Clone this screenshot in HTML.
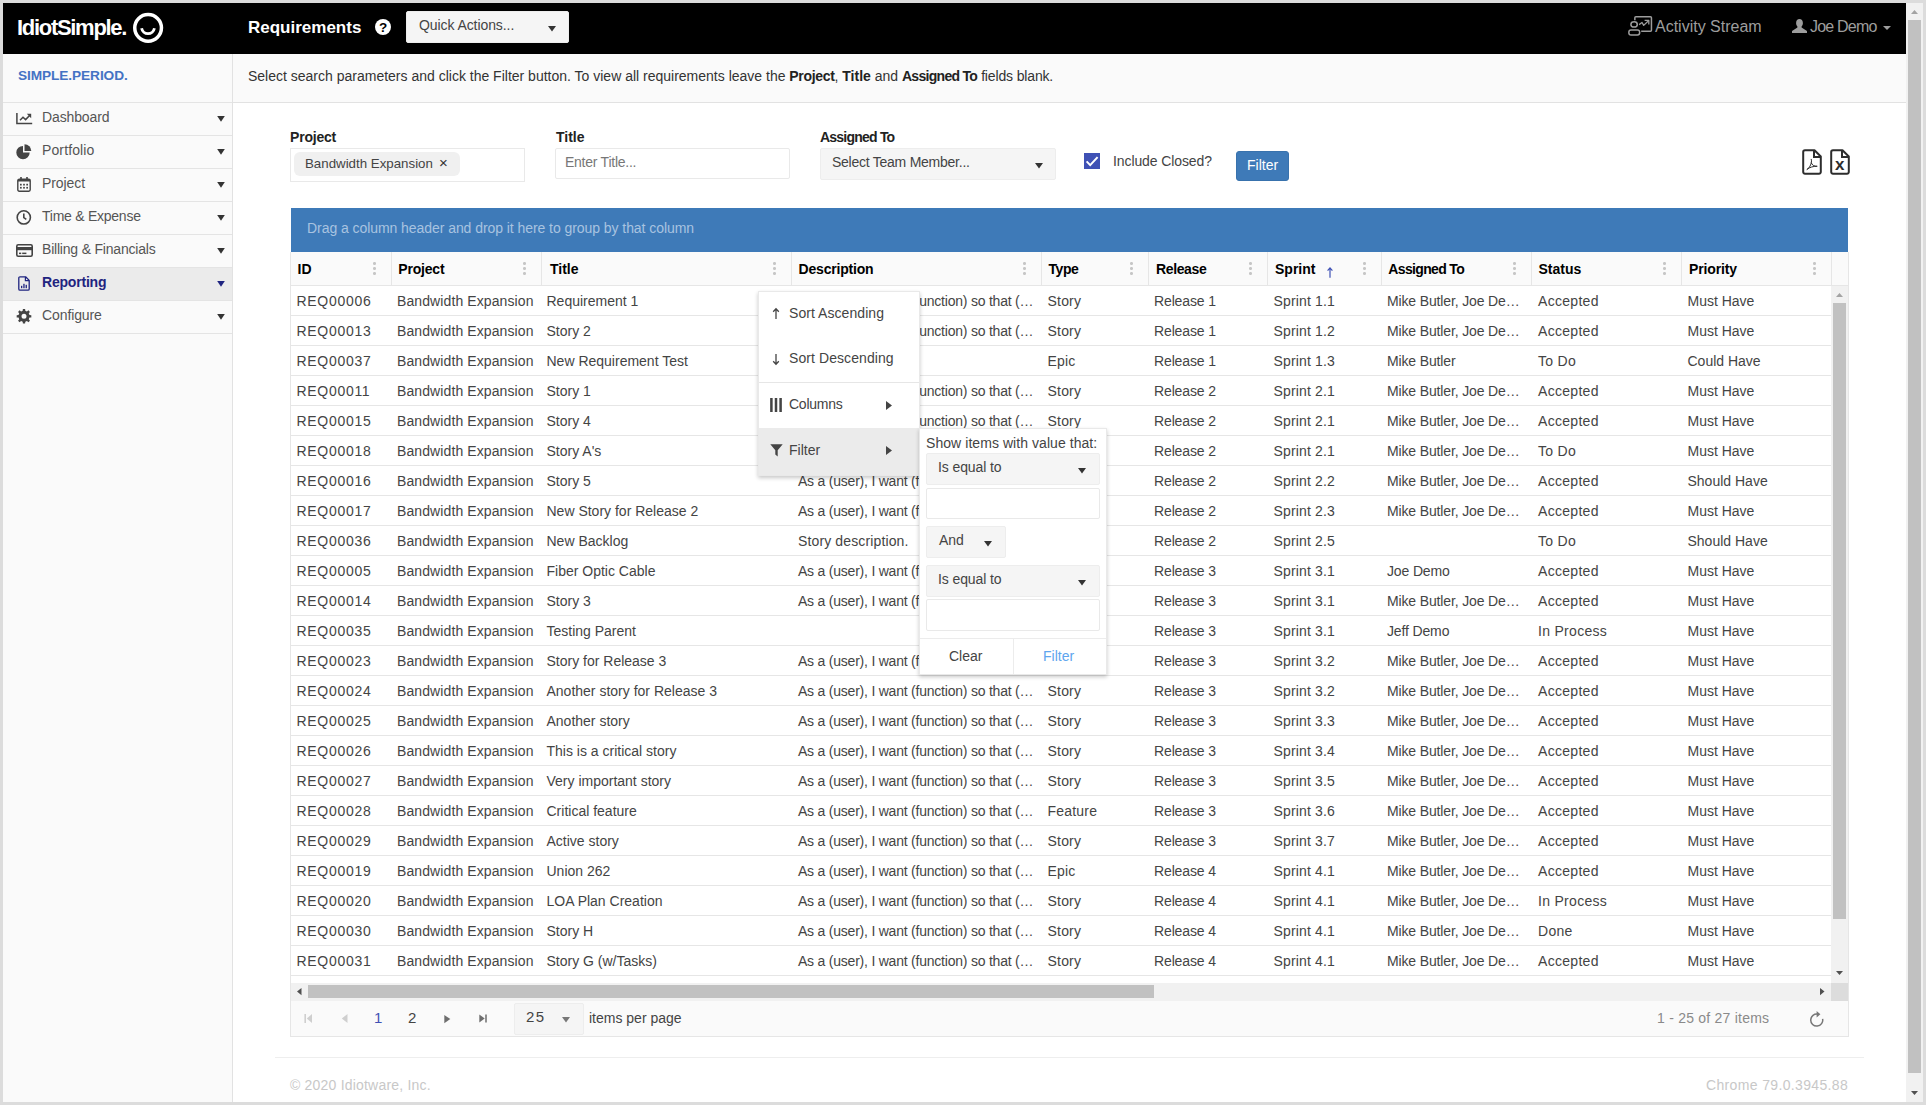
<!DOCTYPE html>
<html lang="en">
<head>
<meta charset="utf-8">
<title>Requirements</title>
<style>
*{box-sizing:border-box;margin:0;padding:0}
html,body{width:1926px;height:1105px;overflow:hidden}
body{background:#dcdcdc;font-family:"Liberation Sans",sans-serif;font-size:14px;color:#444;position:relative}
.abs{position:absolute}
.t{position:absolute;white-space:nowrap;line-height:20px;height:20px}
svg{position:absolute;overflow:visible}
#view{position:absolute;left:3px;top:3px;width:1920px;height:1099px;background:#fff;overflow:hidden}
/* everything inside #page uses full-image coordinates */
#page{position:absolute;left:-3px;top:-3px;width:1926px;height:1105px}
#hdr{left:3px;top:3px;width:1903px;height:51px;background:#000}
#side{left:3px;top:54px;width:230px;height:1048px;background:#fafafa;border-right:1px solid #e2e2e2}
#info{left:233px;top:54px;width:1673px;height:49px;background:#fafafa;border-bottom:1px solid #e2e2e2}
.mi{position:absolute;left:3px;width:229px;height:33px;border-bottom:1px solid #e4e4e4}
.mi .t{left:39px;top:4px;color:#555}
.mi.on{background:#ebebeb}
.mi.on .t{color:#1f2480;font-weight:bold}
.tri{position:absolute;width:8px;height:6px;background:#333;clip-path:polygon(0 0,100% 0,50% 100%);margin-top:-.3px}
.lbl{font-weight:bold;color:#222}
/* grid */
#grid{left:290px;top:252px;width:1559px;height:785px;border:1px solid #e6e6e6;border-top:0;background:#fff}
#grp{left:291px;top:208px;width:1557px;height:44px;background:#3e7ab8}
#ghead{left:291px;top:252px;width:1557px;height:34px;background:#fafafa;border-bottom:1px solid #e6e6e6}
.h{position:absolute;top:0;height:33px;line-height:34px;font-weight:bold;color:#000;padding-left:7px;border-right:1px solid #e6e6e6;white-space:nowrap}
.h i{position:absolute;right:15px;top:10px;width:3px;height:13px;background:radial-gradient(circle 1.5px at 1.5px 1.5px,#c6c6c6 1.3px,transparent 1.6px) 0 0/3px 5px repeat-y}
#gbody{left:291px;top:286px;width:1540px;height:697px;overflow:hidden}
.row{display:flex;height:30px;border-bottom:1px solid #e6e6e6;width:1540px}
.c{flex:none;padding-left:7px;line-height:30px;height:29px;white-space:nowrap;overflow:hidden;color:#444}
.c1{width:101px;padding-left:5.5px;letter-spacing:.7px}.c2{width:150px;padding-left:5px;letter-spacing:.1px}.c3{width:250px;padding-left:4.5px}.c4{width:250px;padding-left:6px;letter-spacing:-.22px}.c5{width:107px;padding-left:5.5px;letter-spacing:.2px}.c6{width:119px;padding-left:5px;letter-spacing:-.13px}
.c7{width:114px;padding-left:5.5px;letter-spacing:.15px}.c8{width:150px;padding-left:5px;letter-spacing:-.14px}.c9{width:150px;padding-left:6px;letter-spacing:.3px}.c10{width:149px;padding-left:5.500px}
.dd{position:absolute;background:#f5f5f5;border:1px solid #ededed;border-radius:2px}
.inp{position:absolute;background:#fff;border:1px solid #e9e9e9;border-radius:2px}
.tri2{position:absolute;width:8px;height:5.5px;background:#333;clip-path:polygon(0 0,100% 0,50% 100%)}
</style>
</head>
<body>
<div id="view"><div id="page">

<!-- ===== top black header ===== -->
<div id="hdr" class="abs"></div>
<div class="t" id="logo" style="left:17px;top:18px;font-size:22px;font-weight:bold;color:#fff;letter-spacing:-1.3px">IdiotSimple.</div>
<svg style="left:132px;top:12px" width="32" height="32" viewBox="0 0 32 32"><circle cx="16.100" cy="15.850" r="13.350" fill="none" stroke="#fff" stroke-width="3.500"/><path d="M9.600 16.300A6.500 6.500 0 0 0 22.400 16.300" fill="none" stroke="#fff" stroke-width="2.800"/></svg>
<div class="t" style="left:248px;top:18px;font-size:17px;font-weight:bold;color:#fff">Requirements</div>
<svg style="left:375px;top:19px" width="16" height="16" viewBox="0 0 16 16"><circle cx="8" cy="8" r="8" fill="#fff"/><text x="8" y="12.800" text-anchor="middle" font-family="Liberation Sans, sans-serif" font-size="13.500" font-weight="bold" fill="#000">?</text></svg>
<div class="dd" style="left:406px;top:11px;width:163px;height:32px"></div>
<div class="t" style="left:419px;top:15px;color:#444;letter-spacing:-.08px">Quick Actions...</div>
<div class="tri2" style="left:548px;top:26px"></div>
<!-- activity stream -->
<svg style="left:1628px;top:15px" width="26" height="22" viewBox="0 0 26 22"><g fill="none" stroke="#9d9d9d" stroke-width="1.500" stroke-linejoin="round"><ellipse cx="6.100" cy="9.400" rx="3.200" ry="2.600"/><rect x=".850" y="14.950" width="10.800" height="5.100" rx="2.200"/><path d="M6.850 5.200V2.850a1 1 0 0 1 1-1H22.450a1 1 0 0 1 1 1V15.350a1 1 0 0 1-1 1H13.200"/><path d="M11.100 9.600l2.900-2.100 1.700 2.900 4.800-4.700" stroke-width="1.300"/><path d="M16.600 5.400h4.200v4" stroke-width="1.300"/></g></svg>
<div class="t" style="left:1655px;top:17px;font-size:16px;color:#9d9d9d">Activity Stream</div>
<svg style="left:1792px;top:19px" width="15" height="14" viewBox="0 0 15 14"><path fill="#9d9d9d" d="M7.500 0c2 0 3.400 1.600 3.400 3.900 0 1.400-.5 2.700-1.300 3.600v.9l5 3.400c.3.200.4.500.4.800V14H0v-1.400c0-.3.100-.6.400-.8l5-3.400v-.9C4.600 6.600 4.100 5.300 4.100 3.900 4.100 1.600 5.500 0 7.500 0z"/></svg>
<div class="t" style="left:1810px;top:17px;font-size:16px;color:#9d9d9d;letter-spacing:-.8px">Joe Demo</div>
<div class="tri2" style="left:1883px;top:26px;height:4px;background:#9d9d9d"></div>

<!-- ===== sidebar ===== -->
<div id="side" class="abs"></div>
<div id="info" class="abs"></div>
<div class="abs" style="left:3px;top:102px;width:229px;height:1px;background:#e4e4e4"></div>
<div class="t" style="left:18px;top:66px;font-size:13.7px;font-weight:bold;color:#4472c4;letter-spacing:-.1px">SIMPLE.PERIOD.</div>
<div class="t" style="left:248px;top:66px;color:#333;letter-spacing:0">Select search parameters and click the Filter button. To view all requirements leave the <b style="color:#222;letter-spacing:-.33px">Project</b>, <b style="color:#222">Title</b> and <b style="color:#222;letter-spacing:-.7px">Assigned To</b> <span style="letter-spacing:-.15px">fields blank.</span></div>

<div class="mi" style="top:103px"><div class="t" style="letter-spacing:-.12px">Dashboard</div></div>
<div class="mi" style="top:136px"><div class="t" style="letter-spacing:.12px">Portfolio</div></div>
<div class="mi" style="top:169px"><div class="t" style="letter-spacing:-.07px">Project</div></div>
<div class="mi" style="top:202px"><div class="t" style="letter-spacing:-.25px">Time &amp; Expense</div></div>
<div class="mi" style="top:235px"><div class="t" style="letter-spacing:-.2px">Billing &amp; Financials</div></div>
<div class="mi on" style="top:268px"><div class="t" style="letter-spacing:-.2px">Reporting</div></div>
<div class="mi" style="top:301px"><div class="t" style="letter-spacing:-.1px">Configure</div></div>
<div class="tri" style="left:217px;top:116px"></div>
<div class="tri" style="left:217px;top:149px"></div>
<div class="tri" style="left:217px;top:182px"></div>
<div class="tri" style="left:217px;top:215px"></div>
<div class="tri" style="left:217px;top:248px"></div>
<div class="tri" style="left:217px;top:281px;background:#1f2480"></div>
<div class="tri" style="left:217px;top:314px"></div>

<svg style="left:16px;top:112px" width="17" height="13" viewBox="0 0 17 13"><path d="M.9 1v10.600h15.300" fill="none" stroke="#444" stroke-width="1.500"/><path d="M4 8.200l3-3 2.600 2.400 4-4.200" fill="none" stroke="#444" stroke-width="1.500"/><path d="M10.800 1.800h4.400v4.400z" fill="#444"/></svg>
<svg style="left:16px;top:144px" width="16" height="16" viewBox="0 0 16 16"><path d="M7 8.600V1.900A6.700 6.700 0 1 0 13.700 8.600z" fill="#444"/><path d="M8.500 7.100V.3A6.800 6.800 0 0 1 15.300 7.100z" fill="#444"/></svg>
<svg style="left:17px;top:177px" width="14" height="15" viewBox="0 0 14 15"><rect x=".8" y="2.300" width="12.400" height="11.900" rx="1.400" fill="none" stroke="#444" stroke-width="1.400"/><rect x=".8" y="2.300" width="12.400" height="2.200" fill="#444"/><rect x="3.200" y="0" width="1.600" height="3" fill="#444"/><rect x="9.200" y="0" width="1.600" height="3" fill="#444"/><g fill="#444"><rect x="3" y="6.800" width="1.700" height="1.700"/><rect x="6.150" y="6.800" width="1.700" height="1.700"/><rect x="9.300" y="6.800" width="1.700" height="1.700"/><rect x="3" y="9.900" width="1.700" height="1.700"/><rect x="6.150" y="9.900" width="1.700" height="1.700"/><rect x="9.300" y="9.900" width="1.700" height="1.700"/></g></svg>
<svg style="left:16px;top:210px" width="16" height="16" viewBox="0 0 16 16"><circle cx="7.800" cy="7.400" r="6.600" fill="none" stroke="#444" stroke-width="1.600"/><path d="M7.800 3.600v4l2.500 1.800" fill="none" stroke="#444" stroke-width="1.600"/></svg>
<svg style="left:16px;top:244px" width="17" height="13" viewBox="0 0 17 13"><rect x=".8" y=".8" width="15.400" height="11.400" rx="1.400" fill="none" stroke="#444" stroke-width="1.600"/><rect x=".8" y="3" width="15.400" height="3.200" fill="#444"/><rect x="3" y="8.600" width="2.200" height="1.500" fill="#444"/><rect x="6.200" y="8.600" width="4.200" height="1.500" fill="#444"/></svg>
<svg style="left:18px;top:276px" width="12" height="15" viewBox="0 0 12 15"><path d="M2 .8h5.600l3.600 3.600v8.600a1.200 1.200 0 0 1-1.200 1.200H2A1.200 1.200 0 0 1 .8 13V2A1.200 1.200 0 0 1 2 .8z" fill="none" stroke="#1f2480" stroke-width="1.300" stroke-linejoin="round"/><path d="M7.400 1v3.600h3.600" fill="none" stroke="#1f2480" stroke-width="1.200"/><g fill="#1f2480"><rect x="3" y="9.800" width="1.300" height="2.400"/><rect x="5.300" y="7.800" width="1.300" height="4.400"/><rect x="7.600" y="8.800" width="1.300" height="3.400"/></g></svg>
<svg style="left:16px;top:308px" width="16" height="16" viewBox="0 0 16 16"><path fill-rule="evenodd" fill="#444" d="M13.45 6.99 L15.32 7.20 L15.32 9.40 L13.45 9.61 L12.77 11.23 L13.95 12.70 L12.40 14.25 L10.93 13.07 L9.31 13.75 L9.10 15.62 L6.90 15.62 L6.69 13.75 L5.07 13.07 L3.60 14.25 L2.05 12.70 L3.23 11.23 L2.55 9.61 L0.68 9.40 L0.68 7.20 L2.55 6.99 L3.23 5.37 L2.05 3.90 L3.60 2.35 L5.07 3.53 L6.69 2.85 L6.90 0.98 L9.10 0.98 L9.31 2.85 L10.93 3.53 L12.40 2.35 L13.95 3.90 L12.77 5.37Z M5.50 8.30 a2.50 2.50 0 1 0 5.00 0 a2.50 2.50 0 1 0 -5.00 0Z"/></svg>


<!-- ===== filter form ===== -->
<div class="t lbl" style="left:290px;top:127px;letter-spacing:-.2px">Project</div>
<div class="inp" style="left:290px;top:148px;width:235px;height:34px;border-radius:0"></div>
<div class="abs" style="left:294px;top:152px;width:166px;height:24px;background:#f0f0f0;border-radius:6px"></div>
<div class="t" style="left:305px;top:154px;font-size:13.3px;color:#444">Bandwidth Expansion</div>
<div class="t" style="left:439px;top:153px;font-size:15px;color:#333">×</div>
<div class="t lbl" style="left:556px;top:127px">Title</div>
<div class="inp" style="left:555px;top:148px;width:235px;height:31px"></div>
<div class="t" style="left:565px;top:152px;color:#777;letter-spacing:-.25px">Enter Title...</div>
<div class="t lbl" style="left:820px;top:127px;letter-spacing:-.78px">Assigned To</div>
<div class="dd" style="left:820px;top:148px;width:236px;height:32px"></div>
<div class="t" style="left:832px;top:152px;color:#444;letter-spacing:-.25px">Select Team Member...</div>
<div class="tri2" style="left:1035px;top:163px"></div>
<svg style="left:1084px;top:153px" width="16" height="16" viewBox="0 0 16 16"><rect width="16" height="16" fill="#3f51b5"/><path d="M2.6 8.4l3.6 3.7 7.4-8" fill="none" stroke="#fff" stroke-width="2"/></svg>
<div class="t" style="left:1113px;top:151px;color:#444;letter-spacing:-.1px">Include Closed?</div>
<div class="abs" style="left:1236px;top:151px;width:53px;height:30px;background:#3e7ab8;border:1px solid #3872ad;border-radius:3px"></div>
<div class="t" style="left:1247px;top:155px;color:#fff">Filter</div>
<!-- export icons -->
<svg style="left:1802px;top:149px" width="20" height="26" viewBox="0 0 20 26"><path d="M3 1.2h9.500l6.300 6.300V23a1.800 1.800 0 0 1-1.800 1.800H3A1.800 1.800 0 0 1 1.200 23V3A1.800 1.800 0 0 1 3 1.200z" fill="#fff" stroke="#2d2d2d" stroke-width="2" stroke-linejoin="round"/><path d="M12 1.500V8h6.500" fill="none" stroke="#2d2d2d" stroke-width="2"/><path d="M5 20.500c1.800-1 3.600-3.800 4.300-6.600.3-1.300.3-2.800 0-3.600M9.300 13.900c.8 2 2.600 3.600 5.700 3.400M5.500 20c2.200-1.700 5.800-2.800 9-2.700" fill="none" stroke="#2d2d2d" stroke-width="1" stroke-linecap="round"/></svg>
<svg style="left:1830px;top:149px" width="20" height="26" viewBox="0 0 20 26"><path d="M3 1.2h9.500l6.300 6.300V23a1.800 1.800 0 0 1-1.800 1.800H3A1.800 1.800 0 0 1 1.200 23V3A1.800 1.800 0 0 1 3 1.200z" fill="#fff" stroke="#2d2d2d" stroke-width="2" stroke-linejoin="round"/><path d="M12 1.500V8h6.500" fill="none" stroke="#2d2d2d" stroke-width="2"/><text x="9.800" y="21.300" text-anchor="middle" font-family="Liberation Sans, sans-serif" font-size="17" font-weight="bold" fill="#2d2d2d">x</text></svg>

<!-- ===== grid ===== -->
<div id="grid" class="abs"></div>
<div id="grp" class="abs"></div>
<div class="t" style="left:307px;top:218px;color:#a8c3e0;letter-spacing:-.06px">Drag a column header and drop it here to group by that column</div>
<div id="ghead" class="abs">
<div class="h" style="left:0;width:101px;padding-left:6.5px">ID<i></i></div>
<div class="h" style="left:101px;width:150px;padding-left:6.3px;letter-spacing:-.2px">Project<i></i></div>
<div class="h" style="left:251px;width:250px;padding-left:8px">Title<i></i></div>
<div class="h" style="left:501px;width:250px;padding-left:6.600px;letter-spacing:-.2px">Description<i></i></div>
<div class="h" style="left:751px;width:107px;padding-left:6.600px;letter-spacing:-.5px">Type<i></i></div>
<div class="h" style="left:858px;width:119px;letter-spacing:-.37px">Release<i></i></div>
<div class="h" style="left:977px;width:114px">Sprint<i></i><svg style="left:59px;top:14.500px" width="6" height="12" viewBox="0 0 6 12"><path d="M3 10.800V1M.6 3.600L3 .9l2.400 2.700" fill="none" stroke="#3f51b5" stroke-width="1.200"/></svg></div>
<div class="h" style="left:1091px;width:150px;padding-left:6.300px;letter-spacing:-.65px">Assigned To<i></i></div>
<div class="h" style="left:1241px;width:150px;padding-left:6.500px">Status<i></i></div>
<div class="h" style="left:1391px;width:150px;letter-spacing:-.14px">Priority<i></i></div>
</div>
<div id="gbody" class="abs">
<div class="row"><div class="c c1">REQ00006</div><div class="c c2">Bandwidth Expansion</div><div class="c c3">Requirement 1</div><div class="c c4">As a (user), I want (function) so that (…</div><div class="c c5">Story</div><div class="c c6">Release 1</div><div class="c c7">Sprint 1.1</div><div class="c c8">Mike Butler, Joe De…</div><div class="c c9">Accepted</div><div class="c c10">Must Have</div></div>
<div class="row"><div class="c c1">REQ00013</div><div class="c c2">Bandwidth Expansion</div><div class="c c3">Story 2</div><div class="c c4">As a (user), I want (function) so that (…</div><div class="c c5">Story</div><div class="c c6">Release 1</div><div class="c c7">Sprint 1.2</div><div class="c c8">Mike Butler, Joe De…</div><div class="c c9">Accepted</div><div class="c c10">Must Have</div></div>
<div class="row"><div class="c c1">REQ00037</div><div class="c c2">Bandwidth Expansion</div><div class="c c3">New Requirement Test</div><div class="c c4"></div><div class="c c5">Epic</div><div class="c c6">Release 1</div><div class="c c7">Sprint 1.3</div><div class="c c8">Mike Butler</div><div class="c c9">To Do</div><div class="c c10">Could Have</div></div>
<div class="row"><div class="c c1">REQ00011</div><div class="c c2">Bandwidth Expansion</div><div class="c c3">Story 1</div><div class="c c4">As a (user), I want (function) so that (…</div><div class="c c5">Story</div><div class="c c6">Release 2</div><div class="c c7">Sprint 2.1</div><div class="c c8">Mike Butler, Joe De…</div><div class="c c9">Accepted</div><div class="c c10">Must Have</div></div>
<div class="row"><div class="c c1">REQ00015</div><div class="c c2">Bandwidth Expansion</div><div class="c c3">Story 4</div><div class="c c4">As a (user), I want (function) so that (…</div><div class="c c5">Story</div><div class="c c6">Release 2</div><div class="c c7">Sprint 2.1</div><div class="c c8">Mike Butler, Joe De…</div><div class="c c9">Accepted</div><div class="c c10">Must Have</div></div>
<div class="row"><div class="c c1">REQ00018</div><div class="c c2">Bandwidth Expansion</div><div class="c c3">Story A's</div><div class="c c4">As a (user), I want (function) so that (…</div><div class="c c5">Story</div><div class="c c6">Release 2</div><div class="c c7">Sprint 2.1</div><div class="c c8">Mike Butler, Joe De…</div><div class="c c9">To Do</div><div class="c c10">Must Have</div></div>
<div class="row"><div class="c c1">REQ00016</div><div class="c c2">Bandwidth Expansion</div><div class="c c3">Story 5</div><div class="c c4">As a (user), I want (function) so that (…</div><div class="c c5">Story</div><div class="c c6">Release 2</div><div class="c c7">Sprint 2.2</div><div class="c c8">Mike Butler, Joe De…</div><div class="c c9">Accepted</div><div class="c c10">Should Have</div></div>
<div class="row"><div class="c c1">REQ00017</div><div class="c c2">Bandwidth Expansion</div><div class="c c3">New Story for Release 2</div><div class="c c4">As a (user), I want (function) so that (…</div><div class="c c5">Story</div><div class="c c6">Release 2</div><div class="c c7">Sprint 2.3</div><div class="c c8">Mike Butler, Joe De…</div><div class="c c9">Accepted</div><div class="c c10">Must Have</div></div>
<div class="row"><div class="c c1">REQ00036</div><div class="c c2">Bandwidth Expansion</div><div class="c c3">New Backlog</div><div class="c c4"><span style="letter-spacing:.13px">Story description.</span></div><div class="c c5">Story</div><div class="c c6">Release 2</div><div class="c c7">Sprint 2.5</div><div class="c c8"></div><div class="c c9">To Do</div><div class="c c10">Should Have</div></div>
<div class="row"><div class="c c1">REQ00005</div><div class="c c2">Bandwidth Expansion</div><div class="c c3">Fiber Optic Cable</div><div class="c c4">As a (user), I want (function) so that (…</div><div class="c c5">Story</div><div class="c c6">Release 3</div><div class="c c7">Sprint 3.1</div><div class="c c8">Joe Demo</div><div class="c c9">Accepted</div><div class="c c10">Must Have</div></div>
<div class="row"><div class="c c1">REQ00014</div><div class="c c2">Bandwidth Expansion</div><div class="c c3">Story 3</div><div class="c c4">As a (user), I want (function) so that (…</div><div class="c c5">Story</div><div class="c c6">Release 3</div><div class="c c7">Sprint 3.1</div><div class="c c8">Mike Butler, Joe De…</div><div class="c c9">Accepted</div><div class="c c10">Must Have</div></div>
<div class="row"><div class="c c1">REQ00035</div><div class="c c2">Bandwidth Expansion</div><div class="c c3">Testing Parent</div><div class="c c4"></div><div class="c c5">Epic</div><div class="c c6">Release 3</div><div class="c c7">Sprint 3.1</div><div class="c c8">Jeff Demo</div><div class="c c9">In Process</div><div class="c c10">Must Have</div></div>
<div class="row"><div class="c c1">REQ00023</div><div class="c c2">Bandwidth Expansion</div><div class="c c3">Story for Release 3</div><div class="c c4">As a (user), I want (function) so that (…</div><div class="c c5">Story</div><div class="c c6">Release 3</div><div class="c c7">Sprint 3.2</div><div class="c c8">Mike Butler, Joe De…</div><div class="c c9">Accepted</div><div class="c c10">Must Have</div></div>
<div class="row"><div class="c c1">REQ00024</div><div class="c c2">Bandwidth Expansion</div><div class="c c3">Another story for Release 3</div><div class="c c4">As a (user), I want (function) so that (…</div><div class="c c5">Story</div><div class="c c6">Release 3</div><div class="c c7">Sprint 3.2</div><div class="c c8">Mike Butler, Joe De…</div><div class="c c9">Accepted</div><div class="c c10">Must Have</div></div>
<div class="row"><div class="c c1">REQ00025</div><div class="c c2">Bandwidth Expansion</div><div class="c c3">Another story</div><div class="c c4">As a (user), I want (function) so that (…</div><div class="c c5">Story</div><div class="c c6">Release 3</div><div class="c c7">Sprint 3.3</div><div class="c c8">Mike Butler, Joe De…</div><div class="c c9">Accepted</div><div class="c c10">Must Have</div></div>
<div class="row"><div class="c c1">REQ00026</div><div class="c c2">Bandwidth Expansion</div><div class="c c3">This is a critical story</div><div class="c c4">As a (user), I want (function) so that (…</div><div class="c c5">Story</div><div class="c c6">Release 3</div><div class="c c7">Sprint 3.4</div><div class="c c8">Mike Butler, Joe De…</div><div class="c c9">Accepted</div><div class="c c10">Must Have</div></div>
<div class="row"><div class="c c1">REQ00027</div><div class="c c2">Bandwidth Expansion</div><div class="c c3">Very important story</div><div class="c c4">As a (user), I want (function) so that (…</div><div class="c c5">Story</div><div class="c c6">Release 3</div><div class="c c7">Sprint 3.5</div><div class="c c8">Mike Butler, Joe De…</div><div class="c c9">Accepted</div><div class="c c10">Must Have</div></div>
<div class="row"><div class="c c1">REQ00028</div><div class="c c2">Bandwidth Expansion</div><div class="c c3">Critical feature</div><div class="c c4">As a (user), I want (function) so that (…</div><div class="c c5">Feature</div><div class="c c6">Release 3</div><div class="c c7">Sprint 3.6</div><div class="c c8">Mike Butler, Joe De…</div><div class="c c9">Accepted</div><div class="c c10">Must Have</div></div>
<div class="row"><div class="c c1">REQ00029</div><div class="c c2">Bandwidth Expansion</div><div class="c c3">Active story</div><div class="c c4">As a (user), I want (function) so that (…</div><div class="c c5">Story</div><div class="c c6">Release 3</div><div class="c c7">Sprint 3.7</div><div class="c c8">Mike Butler, Joe De…</div><div class="c c9">Accepted</div><div class="c c10">Must Have</div></div>
<div class="row"><div class="c c1">REQ00019</div><div class="c c2">Bandwidth Expansion</div><div class="c c3">Union 262</div><div class="c c4">As a (user), I want (function) so that (…</div><div class="c c5">Epic</div><div class="c c6">Release 4</div><div class="c c7">Sprint 4.1</div><div class="c c8">Mike Butler, Joe De…</div><div class="c c9">Accepted</div><div class="c c10">Must Have</div></div>
<div class="row"><div class="c c1">REQ00020</div><div class="c c2">Bandwidth Expansion</div><div class="c c3">LOA Plan Creation</div><div class="c c4">As a (user), I want (function) so that (…</div><div class="c c5">Story</div><div class="c c6">Release 4</div><div class="c c7">Sprint 4.1</div><div class="c c8">Mike Butler, Joe De…</div><div class="c c9">In Process</div><div class="c c10">Must Have</div></div>
<div class="row"><div class="c c1">REQ00030</div><div class="c c2">Bandwidth Expansion</div><div class="c c3">Story H</div><div class="c c4">As a (user), I want (function) so that (…</div><div class="c c5">Story</div><div class="c c6">Release 4</div><div class="c c7">Sprint 4.1</div><div class="c c8">Mike Butler, Joe De…</div><div class="c c9">Done</div><div class="c c10">Must Have</div></div>
<div class="row"><div class="c c1">REQ00031</div><div class="c c2">Bandwidth Expansion</div><div class="c c3">Story G (w/Tasks)</div><div class="c c4">As a (user), I want (function) so that (…</div><div class="c c5">Story</div><div class="c c6">Release 4</div><div class="c c7">Sprint 4.1</div><div class="c c8">Mike Butler, Joe De…</div><div class="c c9">Accepted</div><div class="c c10">Must Have</div></div>
<div class="row"><div class="c c1">REQ00032</div><div class="c c2">Bandwidth Expansion</div><div class="c c3">Story I</div><div class="c c4">As a (user), I want (function) so that (…</div><div class="c c5">Story</div><div class="c c6">Release 4</div><div class="c c7">Sprint 4.2</div><div class="c c8">Mike Butler, Joe De…</div><div class="c c9">Accepted</div><div class="c c10">Must Have</div></div>
</div>

<div class="abs" style="left:1831px;top:286px;width:17px;height:697px;background:#f1f1f1"></div>
<div class="abs" style="left:1833px;top:303px;width:13px;height:616px;background:#c1c1c1"></div>
<svg style="left:1836px;top:293px" width="8" height="4" viewBox="0 0 8 4"><path d="M0 4l3.500-4 3.500 4z" fill="#a3a3a3"/></svg>
<svg style="left:1836px;top:971px" width="8" height="4" viewBox="0 0 8 4"><path d="M0 0l3.500 4 3.500-4z" fill="#505050"/></svg>
<div class="abs" style="left:291px;top:983px;width:1557px;height:18px;background:#f1f1f1"></div>
<div class="abs" style="left:1831px;top:983px;width:17px;height:18px;background:#dcdcdc"></div>
<div class="abs" style="left:308px;top:985px;width:846px;height:13px;background:#c1c1c1"></div>
<svg style="left:297px;top:988px" width="5" height="8" viewBox="0 0 5 8"><path d="M4.500 0L0 3.600l4.500 3.600z" fill="#505050"/></svg>
<svg style="left:1820px;top:988px" width="5" height="8" viewBox="0 0 5 8"><path d="M0 0l4.500 3.600L0 7.200z" fill="#505050"/></svg>
<div class="abs" style="left:291px;top:1001px;width:1557px;height:35px;background:#fafafa"></div>
<svg style="left:304px;top:1014px" width="9" height="9" viewBox="0 0 9 9"><path d="M1.200 0v9" stroke="#cfcfcf" stroke-width="1.600"/><path d="M8 0L2.800 4.500 8 9z" fill="#cfcfcf"/></svg>
<svg style="left:341px;top:1014px" width="7" height="9" viewBox="0 0 7 9"><path d="M6.500 0L.8 4.500 6.500 9z" fill="#cfcfcf"/></svg>
<div class="t" style="left:374px;top:1008px;font-size:15px;color:#3f51b5">1</div>
<div class="t" style="left:408px;top:1008px;font-size:15px;color:#444">2</div>
<svg style="left:444px;top:1014.500px" width="7" height="9" viewBox="0 0 7 9"><path d="M.3 0l6 4.100L.3 8.200z" fill="#6e6e6e"/></svg>
<svg style="left:479px;top:1014px" width="9" height="9" viewBox="0 0 9 9"><path d="M7 .4v8" stroke="#6e6e6e" stroke-width="1.500"/><path d="M.3 .4l5.400 4L.3 8.400z" fill="#6e6e6e"/></svg>
<div class="dd" style="left:514px;top:1003px;width:70px;height:32px"></div>
<div class="t" style="left:526px;top:1007px;font-size:15px;color:#444;letter-spacing:1.4px">25</div>
<div class="tri2" style="left:562px;top:1017px;background:#777"></div>
<div class="t" style="left:589px;top:1008px;color:#444">items per page</div>
<div class="t" style="left:1657px;top:1008px;color:#8a8a8a;letter-spacing:.23px">1 - 25 of 27 items</div>
<svg style="left:1809px;top:1011px" width="16" height="17" viewBox="0 0 16 17"><path d="M8.800 3.200A6 6 0 1 0 13.600 7.800" fill="none" stroke="#777" stroke-width="1.500"/><path d="M7.600 0l3.800 3.200-3.800 3.200z" fill="#777"/></svg>



<div class="abs" style="left:758px;top:291px;width:162px;height:185px;background:#fff;border:1px solid #e9e9e9;box-shadow:0 2px 4px rgba(0,0,0,.22)"></div>
<div class="abs" style="left:759px;top:428px;width:160px;height:47px;background:#ebebeb"></div>
<div class="abs" style="left:759px;top:382px;width:160px;height:1px;background:#e6e6e6"></div>
<svg style="left:772.400px;top:307.500px" width="8" height="12" viewBox="0 0 8 12"><path d="M4 11V1M1.200 3.800l2.800-3 2.800 3" fill="none" stroke="#444" stroke-width="1.300"/></svg>
<div class="t" style="left:789px;top:303px;letter-spacing:.06px">Sort Ascending</div>
<svg style="left:772.400px;top:352.500px" width="8" height="12" viewBox="0 0 8 12"><path d="M4 1v10M1.200 8.200l2.800 3 2.800-3" fill="none" stroke="#444" stroke-width="1.300"/></svg>
<div class="t" style="left:789px;top:348px;letter-spacing:.08px">Sort Descending</div>
<svg style="left:770px;top:398px" width="12" height="14" viewBox="0 0 12 14"><path d="M1.400 0v14M6 0v14M10.600 0v14" stroke="#444" stroke-width="2.500"/></svg>
<div class="t" style="left:789px;top:394px;letter-spacing:-.25px">Columns</div>
<svg style="left:886px;top:401px" width="6" height="9" viewBox="0 0 6 9"><path d="M0 0l6 4.500L0 9z" fill="#444"/></svg>
<svg style="left:770px;top:444px" width="13" height="13" viewBox="0 0 13 13"><path d="M.3.300h12.400L7.700 6.300v6.200L5.300 10.600V6.300z" fill="#444"/></svg>
<div class="t" style="left:789px;top:440px">Filter</div>
<svg style="left:886px;top:446px" width="6" height="9" viewBox="0 0 6 9"><path d="M0 0l6 4.500L0 9z" fill="#444"/></svg>

<div class="abs" style="left:919px;top:428px;width:188px;height:247px;background:#fff;border:1px solid #e9e9e9;box-shadow:0 2px 4px rgba(0,0,0,.22)"></div>
<div class="t" style="left:926px;top:433px;letter-spacing:.06px">Show items with value that:</div>
<div class="dd" style="left:926px;top:453px;width:174px;height:32px"></div>
<div class="t" style="left:938px;top:457px;letter-spacing:-.1px">Is equal to</div>
<div class="tri2" style="left:1078px;top:468px"></div>
<div class="inp" style="left:926px;top:488px;width:174px;height:31px"></div>
<div class="dd" style="left:926px;top:526px;width:80px;height:32px"></div>
<div class="t" style="left:939px;top:530px">And</div>
<div class="tri2" style="left:984px;top:541px"></div>
<div class="dd" style="left:926px;top:565px;width:174px;height:32px"></div>
<div class="t" style="left:938px;top:569px;letter-spacing:-.1px">Is equal to</div>
<div class="tri2" style="left:1078px;top:580px"></div>
<div class="inp" style="left:926px;top:599px;width:174px;height:32px"></div>
<div class="abs" style="left:920px;top:638px;width:186px;height:1px;background:#ececec"></div>
<div class="abs" style="left:1013px;top:639px;width:1px;height:35px;background:#ececec"></div>
<div class="t" style="left:949px;top:646px">Clear</div>
<div class="t" style="left:1043px;top:646px;color:#5ea5ee">Filter</div>



<div class="abs" style="left:275px;top:1057px;width:1589px;height:1px;background:#eee"></div>
<div class="t" style="left:290px;top:1075px;color:#c8c8c8;letter-spacing:.2px">© 2020 Idiotware, Inc.</div>
<div class="t" style="left:1706px;top:1075px;color:#c8c8c8;letter-spacing:.35px">Chrome 79.0.3945.88</div>
<!-- page scrollbar -->
<div class="abs" style="left:1906px;top:3px;width:17px;height:1099px;background:#f1f1f1"></div>
<div class="abs" style="left:1908px;top:20px;width:13px;height:1053px;background:#c1c1c1"></div>
<svg style="left:1911px;top:10px" width="8" height="4" viewBox="0 0 8 4"><path d="M0 4l3.500-4 3.500 4z" fill="#a3a3a3"/></svg>
<svg style="left:1911px;top:1091px" width="8" height="4" viewBox="0 0 8 4"><path d="M0 0l3.500 4 3.500-4z" fill="#505050"/></svg>


</div></div>
</body>
</html>
